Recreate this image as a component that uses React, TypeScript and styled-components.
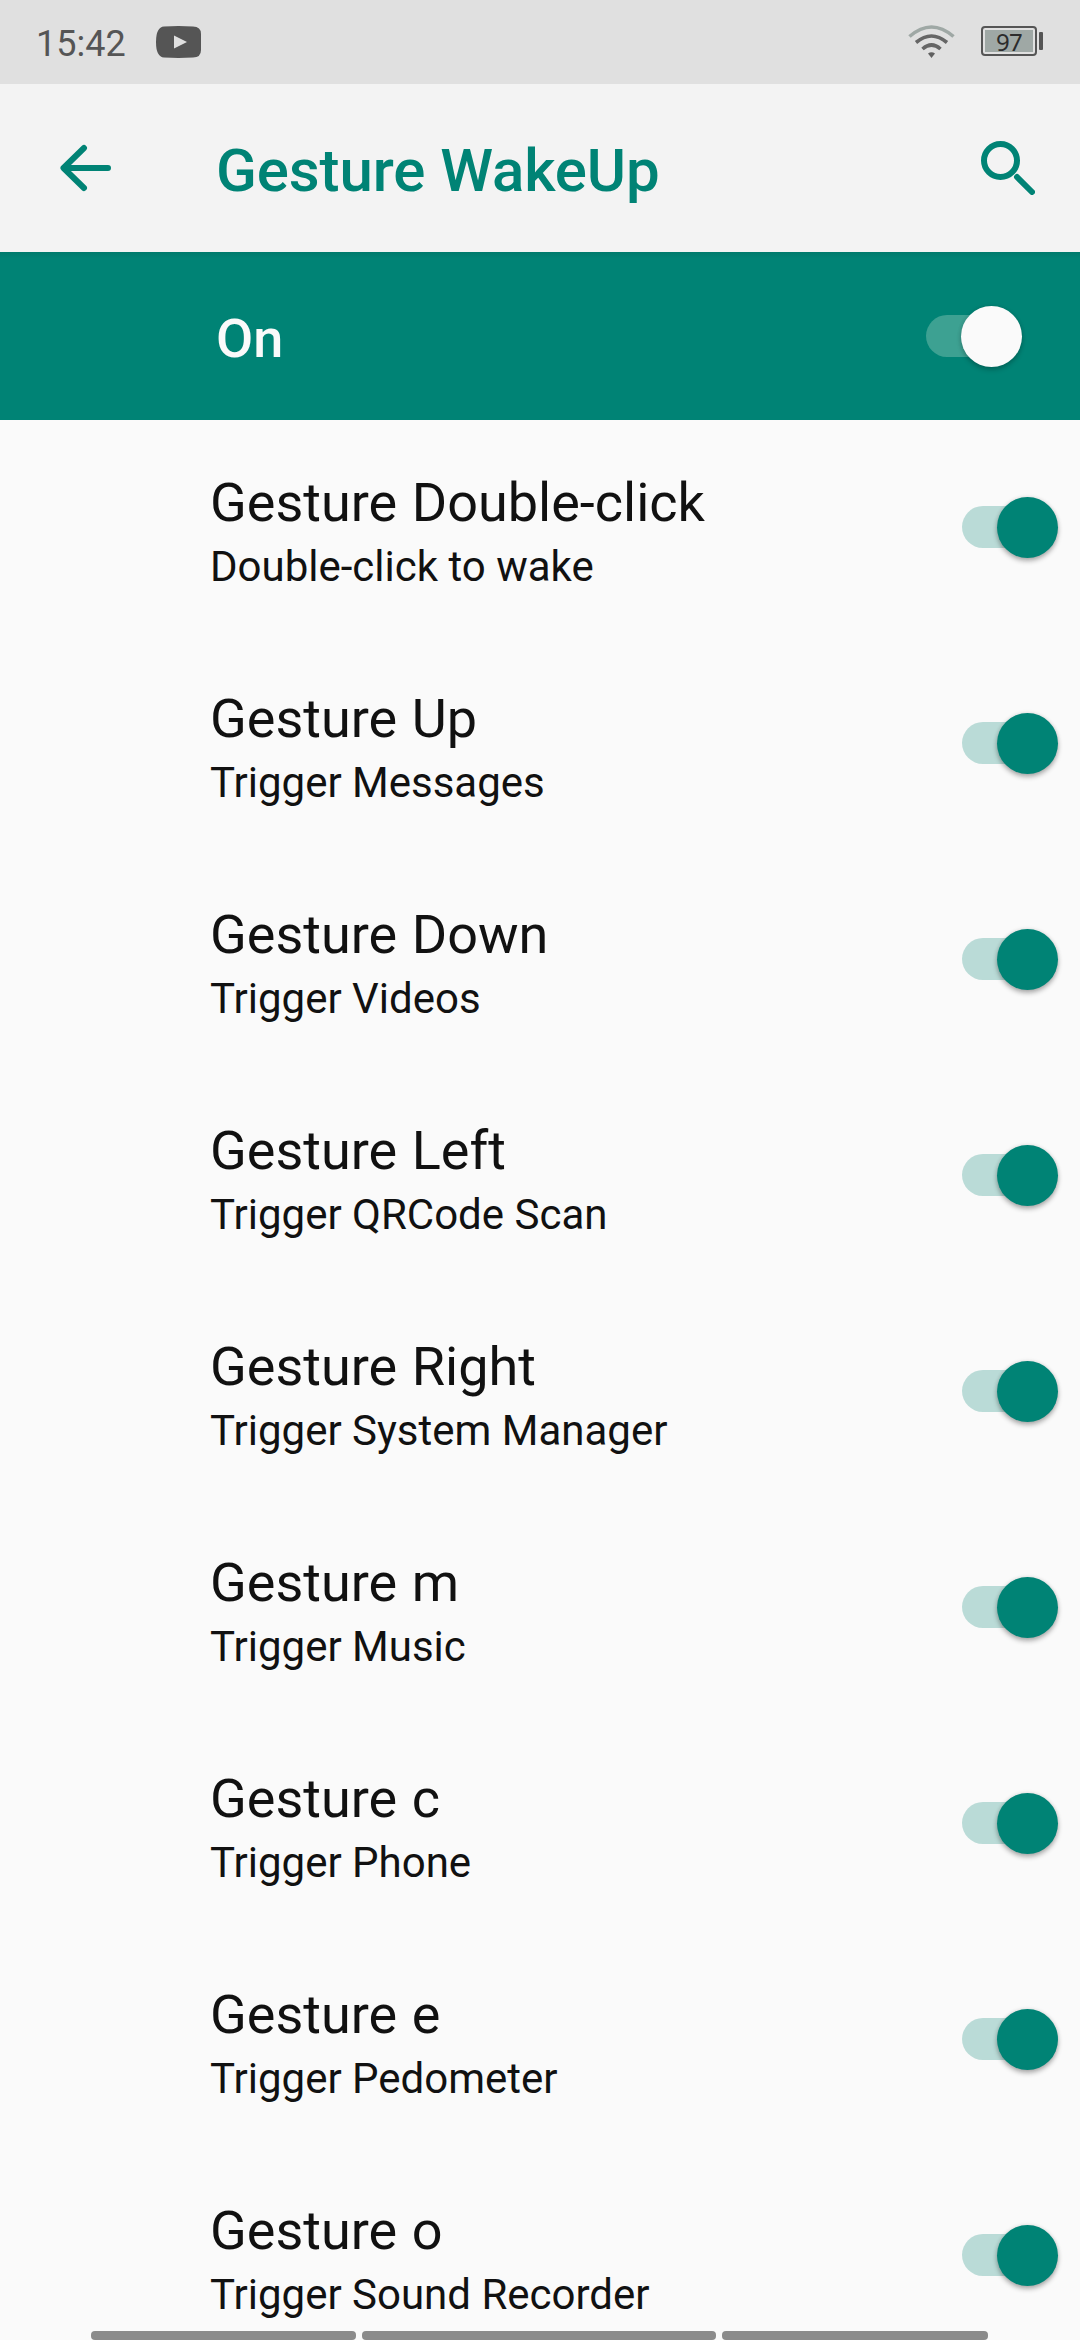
import React from "react";
import styled, { createGlobalStyle } from "styled-components";

const Global = createGlobalStyle`
  html, body { margin: 0; background: #fafafa; }
  body { font-family: Roboto, "Noto Sans", sans-serif; overflow: hidden; }
  * { box-sizing: border-box; }
`;

const Screen = styled.main`
  position: relative;
  display: flex;
  flex-direction: column;
  width: 1080px;
  height: 2340px;
  overflow: hidden;
  background: #fafafa;
`;

const StatusBar = styled.div`
  flex: none;
  display: flex;
  align-items: center;
  height: 84px;
  padding: 0 37px 0 36px;
  background: #e0e0e0;
`;

const Clock = styled.span`
  width: 120px;
  padding-top: 3px;
  font-size: 36px;
  line-height: 44px;
  color: #555;
`;

const StatusIcons = styled.div`
  display: flex;
  align-items: center;
  gap: 26px;
  margin-left: auto;
`;

const Battery = styled.div`
  display: flex;
  align-items: center;
  gap: 2px;
  margin-bottom: 2px;
`;

const BatteryShell = styled.div`
  display: flex;
  width: 56px;
  height: 30px;
  padding: 2px;
  border: 2px solid #555;
  border-radius: 4px;
`;

const BatteryFill = styled.div`
  width: 48px;
  height: 22px;
  background: #9fa8a5;
  color: #2c2c2c;
  font: 400 24px/23px "Noto Sans", sans-serif;
  letter-spacing: -0.8px;
  text-align: center;
`;

const BatteryCap = styled.div`
  width: 4px;
  height: 18px;
  border-radius: 1px;
  background: #555;
`;

const Toolbar = styled.header`
  flex: none;
  display: flex;
  align-items: center;
  height: 168px;
  padding: 0 45px 0 60px;
  background: #f3f3f3;
  color: #008375;
`;

const IconButton = styled.button`
  display: flex;
  padding: 0;
  border: 0;
  background: none;
  color: inherit;
`;

const Title = styled.h1`
  flex: 1;
  margin: 0 0 0 104px;
  padding-top: 5px;
  font-size: 60px;
  font-weight: 500;
  line-height: 70px;
  letter-spacing: -0.1px;
`;

const MasterRow = styled.section`
  flex: none;
  display: flex;
  align-items: center;
  justify-content: space-between;
  height: 168px;
  padding: 1px 58px 0 216px;
  background: linear-gradient(#007a6c, #008375 6px);
  color: #fafafa;
`;

const MasterLabel = styled.span`
  padding-top: 4px;
  font-size: 54px;
  font-weight: 500;
  line-height: 64px;
`;

const Switch = styled.button`
  display: flex;
  align-items: center;
  width: 96px;
  height: 61px;
  padding: 0;
  border: 0;
  background: none;
`;

const Track = styled.span<{ $inverse?: boolean }>`
  flex: 1;
  height: 42px;
  margin: 0 -31px 1px 0;
  border-radius: 21px 0 0 21px;
  background: ${(p) => (p.$inverse ? "#3da192" : "#badbd7")};
`;

const Thumb = styled.span<{ $inverse?: boolean }>`
  position: relative;
  width: 61px;
  height: 61px;
  border-radius: 50%;
  background: ${(p) => (p.$inverse ? "#fafafa" : "#008375")};
  box-shadow: 0 3px 5px rgba(0, 0, 0, ${(p) => (p.$inverse ? 0.2 : 0.3)}),
    0 0 4px rgba(0, 0, 0, 0.1);
`;

const List = styled.ul`
  margin: 0;
  padding: 0;
  list-style: none;
`;

const Row = styled.li`
  display: flex;
  align-items: center;
  justify-content: space-between;
  height: 216px;
  padding: 0 22px 1px 210px;
  color: #111;
`;

const RowText = styled.div`
  padding-top: 7px;
`;

const RowTitle = styled.div`
  font-size: 54px;
  line-height: 64px;
  word-spacing: 1.2px;
`;

const RowSummary = styled.div`
  padding-top: 7px;
  font-size: 42px;
  line-height: 50px;
`;

const NavHints = styled.nav`
  position: absolute;
  left: 91px;
  bottom: 0;
  display: grid;
  grid-template-columns: 265px 354px 266px;
  gap: 6px;
`;

const NavHint = styled.span`
  height: 9px;
  border-radius: 4px;
  background: #8b8b8b;
`;

const gestures = [
  ["Gesture Double-click", "Double-click to wake"],
  ["Gesture Up", "Trigger Messages"],
  ["Gesture Down", "Trigger Videos"],
  ["Gesture Left", "Trigger QRCode Scan"],
  ["Gesture Right", "Trigger System Manager"],
  ["Gesture m", "Trigger Music"],
  ["Gesture c", "Trigger Phone"],
  ["Gesture e", "Trigger Pedometer"],
  ["Gesture o", "Trigger Sound Recorder"],
];

const Toggle = ({ inverse }: { inverse?: boolean }) => (
  <Switch role="switch" aria-checked="true">
    <Track $inverse={inverse} />
    <Thumb $inverse={inverse} />
  </Switch>
);

export default function App() {
  return (
    <Screen>
      <Global />
      <StatusBar>
        <Clock>15:42</Clock>
        <svg width="45" height="32" viewBox="0 0 45 32">
          <path d="M8 0.5Q22.500 -0.300 37 0.500Q45 0.500 45 8V24Q45 31.500 37 31.500Q22.500 32.300 8 31.500Q0 31 0 16Q0 1 8 .5Z" fill="#555" />
          <path d="M18 9.500V22.500L31 16Z" fill="#e0e0e0" />
        </svg>
        <StatusIcons>
          <svg width="47" height="34" viewBox="0 0 47 34" fill="none">
            <path d="M1.500 11.500Q23.500 -7.500 45.500 11.500" stroke="#9fa8a5" strokeWidth="3.600" />
            <path d="M8 17.500Q23.500 4.500 39 17.500M14.500 24Q23.500 16 32.500 24" stroke="#666" strokeWidth="3.600" />
            <path d="M20 28.500Q23.500 26 27 28.500L23.500 33Z" fill="#606060" />
          </svg>
          <Battery>
            <BatteryShell>
              <BatteryFill>97</BatteryFill>
            </BatteryShell>
            <BatteryCap />
          </Battery>
        </StatusIcons>
      </StatusBar>
      <Toolbar>
        <IconButton aria-label="Back">
          <svg width="52" height="48" viewBox="0 0 52 48" fill="none" stroke="currentColor" strokeWidth="6" strokeLinecap="round" strokeLinejoin="round">
            <path d="M24 4L3.500 24L24 44M4 24H48" />
          </svg>
        </IconButton>
        <Title>Gesture WakeUp</Title>
        <IconButton aria-label="Search">
          <svg width="54" height="54" viewBox="0 0 54 54" fill="none" stroke="currentColor" strokeWidth="6" strokeLinecap="round">
            <circle cx="19.500" cy="19.500" r="16.500" />
            <path d="M36 36L51 51" />
          </svg>
        </IconButton>
      </Toolbar>
      <MasterRow>
        <MasterLabel>On</MasterLabel>
        <Toggle inverse />
      </MasterRow>
      <List>
        {gestures.map(([title, summary]) => (
          <Row key={title}>
            <RowText>
              <RowTitle>{title}</RowTitle>
              <RowSummary>{summary}</RowSummary>
            </RowText>
            <Toggle />
          </Row>
        ))}
      </List>
      <NavHints>
        <NavHint />
        <NavHint />
        <NavHint />
      </NavHints>
    </Screen>
  );
}
